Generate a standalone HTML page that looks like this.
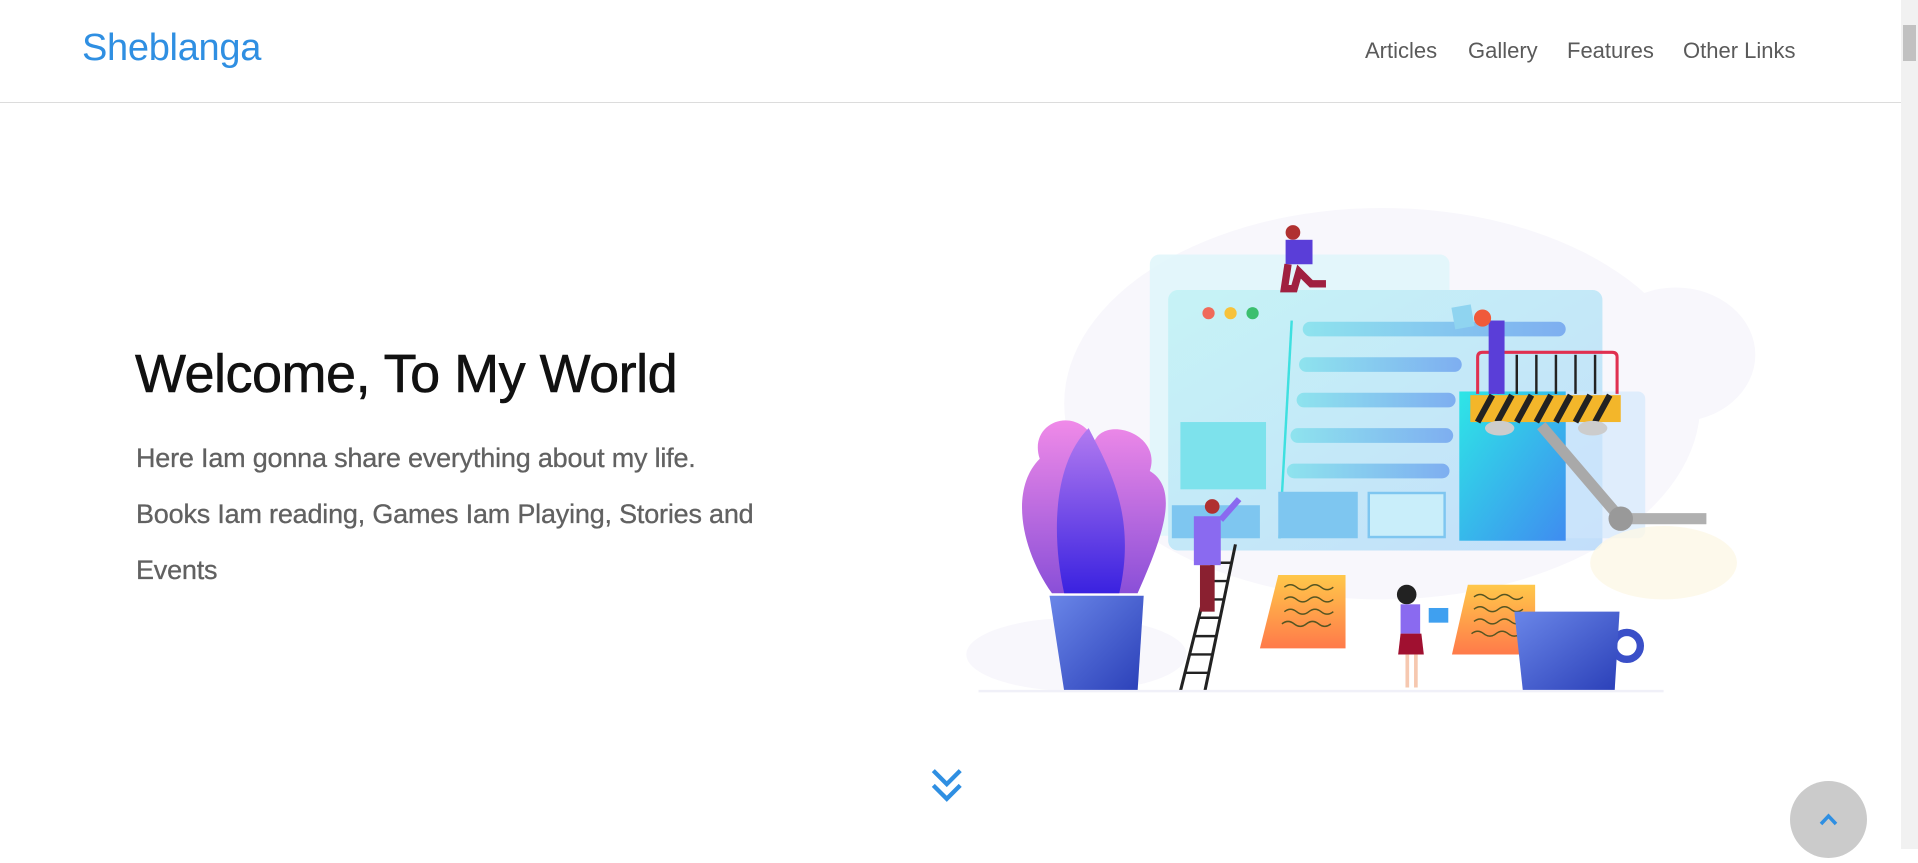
<!DOCTYPE html>
<html><head><meta charset="utf-8"><style>
html,body{margin:0;padding:0;}
body{width:1918px;height:849px;overflow:hidden;background:#fff;position:relative;font-family:"Liberation Sans",sans-serif;}
.hdr{position:absolute;left:0;top:0;width:1901px;height:102px;border-bottom:1px solid #dcdcdc;background:#fff;}
.logo{position:absolute;left:82px;top:27px;font-size:38px;color:#2f8fe2;letter-spacing:-0.3px;}
.nav{position:absolute;top:38px;font-size:22px;color:#5a5a5a;}
h1{position:absolute;left:135px;top:343px;margin:0;font-size:54px;font-weight:normal;color:#111;letter-spacing:-0.5px;white-space:nowrap;-webkit-text-stroke:0.6px #111;}
.p{position:absolute;left:136px;top:430px;font-size:27px;line-height:56px;color:#616161;letter-spacing:-0.2px;white-space:nowrap;-webkit-text-stroke:0.3px #616161;}
.sb{position:absolute;right:0;top:0;width:17px;height:849px;background:#f1f1f1;}
.thumb{position:absolute;right:2px;top:25px;width:13px;height:36px;background:#c1c1c1;}
.top{position:absolute;left:1790px;top:781px;width:77px;height:77px;border-radius:50%;background:#cbcbcb;}
</style></head><body>
<div class="hdr">
<div class="logo">Sheblanga</div>
<div class="nav" style="left:1365px">Articles</div>
<div class="nav" style="left:1468px">Gallery</div>
<div class="nav" style="left:1567px">Features</div>
<div class="nav" style="left:1683px">Other Links</div>
</div>
<h1>Welcome, To My World</h1>
<div class="p">Here Iam gonna share everything about my life.<br>Books Iam reading, Games Iam Playing, Stories and<br>Events</div>

<svg style="position:absolute;left:0;top:0" width="1918" height="849" viewBox="0 0 1568 694">
<defs>
<linearGradient id="pn" x1="0" y1="0" x2="1" y2="1"><stop offset="0" stop-color="#c6f3f6"/><stop offset="1" stop-color="#c2defa"/></linearGradient>
<linearGradient id="bar" x1="0" y1="0" x2="1" y2="0"><stop offset="0" stop-color="#8ee3ee"/><stop offset="1" stop-color="#7eaef0"/></linearGradient>
<linearGradient id="tb" x1="0" y1="0" x2="1" y2="1"><stop offset="0" stop-color="#2ee6e6"/><stop offset="1" stop-color="#3f8cf0"/></linearGradient>
<linearGradient id="lf" x1="0" y1="0" x2="0" y2="1"><stop offset="0" stop-color="#f08ae8"/><stop offset="1" stop-color="#8a4fd8"/></linearGradient>
<linearGradient id="lf2" x1="0" y1="0" x2="0" y2="1"><stop offset="0" stop-color="#b27af0"/><stop offset="1" stop-color="#3a22e0"/></linearGradient>
<linearGradient id="nt" x1="0" y1="0" x2="0" y2="1"><stop offset="0" stop-color="#ffc84a"/><stop offset="1" stop-color="#ff7a4a"/></linearGradient>
<linearGradient id="pot" x1="0" y1="0" x2="1" y2="1"><stop offset="0" stop-color="#6a86e8"/><stop offset="1" stop-color="#2a3fb8"/></linearGradient>
</defs>
<ellipse cx="1130" cy="330" rx="260" ry="160" fill="#f8f7fc"/>
<ellipse cx="1370" cy="290" rx="65" ry="55" fill="#f8f7fc"/>
<ellipse cx="880" cy="535" rx="90" ry="30" fill="#f8f7fc"/>
<rect x="940" y="208" width="245" height="230" rx="8" fill="#ddf5fa" opacity=".8"/>
<rect x="955" y="237" width="355" height="213" rx="8" fill="url(#pn)"/>
<rect x="1200" y="320" width="145" height="120" rx="6" fill="#cfe6fb" opacity=".6"/>
<circle cx="988" cy="256" r="5" fill="#f06a5a"/><circle cx="1006" cy="256" r="5" fill="#f7c23a"/><circle cx="1024" cy="256" r="5" fill="#3bbf6e"/>
<line x1="1056" y1="262" x2="1046" y2="440" stroke="#3ee0e0" stroke-width="2"/>
<rect x="1065" y="263" width="215" height="12" rx="6" fill="url(#bar)"/>
<rect x="1062" y="292" width="133" height="12" rx="6" fill="url(#bar)"/>
<rect x="1060" y="321" width="130" height="12" rx="6" fill="url(#bar)"/>
<rect x="1055" y="350" width="133" height="12" rx="6" fill="url(#bar)"/>
<rect x="1052" y="379" width="133" height="12" rx="6" fill="url(#bar)"/>
<rect x="965" y="345" width="70" height="55" fill="#7de2ec"/>
<rect x="958" y="413" width="72" height="27" fill="#7ec6f0"/>
<rect x="1045" y="402" width="65" height="38" fill="#7ec6f0"/>
<rect x="1119" y="403" width="62" height="36" fill="#c9eefa" stroke="#7ec6f0" stroke-width="2"/>
<rect x="1193" y="320" width="87" height="122" fill="url(#tb)"/>
<path d="M1208 322V292Q1208 288 1212 288H1318Q1322 288 1322 292V322" fill="none" stroke="#e03050" stroke-width="2.5"/>
<g stroke="#222" stroke-width="2"><line x1="1225" y1="290" x2="1225" y2="322"/><line x1="1240" y1="290" x2="1240" y2="322"/><line x1="1256" y1="290" x2="1256" y2="322"/><line x1="1272" y1="290" x2="1272" y2="322"/><line x1="1288" y1="290" x2="1288" y2="322"/><line x1="1304" y1="290" x2="1304" y2="322"/></g>
<rect x="1202" y="323" width="123" height="22" fill="#f3b62a"/>
<g stroke="#222" stroke-width="5"><line x1="1208" y1="345" x2="1220" y2="323"/><line x1="1224" y1="345" x2="1236" y2="323"/><line x1="1240" y1="345" x2="1252" y2="323"/><line x1="1256" y1="345" x2="1268" y2="323"/><line x1="1272" y1="345" x2="1284" y2="323"/><line x1="1288" y1="345" x2="1300" y2="323"/><line x1="1304" y1="345" x2="1316" y2="323"/></g>
<ellipse cx="1226" cy="350" rx="12" ry="6" fill="#ccc"/><ellipse cx="1302" cy="350" rx="12" ry="6" fill="#ccc"/>
<path d="M1260 348L1325 424" stroke="#a9a9a9" stroke-width="9"/>
<path d="M1325 424H1395" stroke="#b0b0b0" stroke-width="9"/>
<circle cx="1325" cy="424" r="10" fill="#999"/>
<ellipse cx="1360" cy="460" rx="60" ry="30" fill="#fcf8e6" opacity=".8"/>
<rect x="1217" y="262" width="13" height="60" fill="#5a3ed8"/><circle cx="1212" cy="260" r="7" fill="#f05a3a"/><rect x="1188" y="250" width="16" height="18" fill="#8fd4f0" transform="rotate(-10 1196 259)"/>
<circle cx="1057" cy="190" r="6" fill="#b03030"/><rect x="1051" y="196" width="22" height="20" fill="#5a3ed8"/><path d="M1053 216L1050 236H1058L1062 222L1072 232H1084" stroke="#a02040" stroke-width="6" fill="none"/>
<path d="M965 565L995 445M985 565L1010 445" stroke="#222" stroke-width="2.5"/>
<g stroke="#222" stroke-width="2"><line x1="969" y1="550" x2="988" y2="550"/><line x1="973" y1="535" x2="992" y2="535"/><line x1="977" y1="520" x2="995" y2="520"/><line x1="980" y1="505" x2="998" y2="505"/><line x1="984" y1="490" x2="1001" y2="490"/><line x1="987" y1="475" x2="1004" y2="475"/><line x1="990" y1="460" x2="1007" y2="460"/></g>
<circle cx="991" cy="414" r="6" fill="#b03030"/><rect x="976" y="422" width="22" height="40" fill="#8a6af0"/><rect x="981" y="462" width="12" height="38" fill="#8a2030"/><line x1="998" y1="425" x2="1013" y2="408" stroke="#8a6af0" stroke-width="5"/>
<circle cx="1150" cy="486" r="8" fill="#222"/><rect x="1145" y="494" width="16" height="24" fill="#8a6af0"/><path d="M1145 518H1162L1164 535H1143Z" fill="#a01030"/><rect x="1149" y="535" width="3" height="27" fill="#f6c8b0"/><rect x="1156" y="535" width="3" height="27" fill="#f6c8b0"/><rect x="1168" y="497" width="16" height="12" fill="#3fa0f0"/>
<path d="M1045 470H1100V530H1030Z" fill="url(#nt)"/>
<path d="M1200 478H1255V535H1187Z" fill="url(#nt)"/>
<g stroke="#552" stroke-width="1.2" fill="none"><path d="M1050 480q5-4 10 0t10 0 10 0 10 0"/><path d="M1050 490q5-4 10 0t10 0 10 0 10 0"/><path d="M1050 500q5-4 10 0t10 0 10 0 10 0"/><path d="M1048 510q5-4 10 0t10 0 10 0 10 0"/><path d="M1205 488q5-4 10 0t10 0 10 0 10 0"/><path d="M1205 498q5-4 10 0t10 0 10 0 10 0"/><path d="M1205 508q5-4 10 0t10 0 10 0 10 0"/><path d="M1203 518q5-4 10 0t10 0 10 0 10 0"/></g>
<path d="M860 485C835 450 825 400 850 375C840 345 880 330 895 360C905 340 950 355 940 385C965 400 950 440 930 485Z" fill="url(#lf)"/>
<path d="M870 485C860 440 860 380 890 350C905 380 930 420 915 485Z" fill="url(#lf2)"/>
<path d="M858 487H935L930 565H870Z" fill="url(#pot)"/>
<circle cx="1330" cy="528" r="11" fill="none" stroke="#3a4fc8" stroke-width="6"/>
<path d="M1238 500H1324L1320 565H1245Z" fill="url(#pot)"/>
<line x1="800" y1="565" x2="1360" y2="565" stroke="#f0f0f8" stroke-width="2"/>
<path d="M763 630L774 641L785 630M763 642L774 653L785 642" fill="none" stroke="#2f8fe2" stroke-width="3.5"/>
</svg>
<div class="top"><svg width="77" height="77"><path d="M31 43L38.5 35L46 43" fill="none" stroke="#2f8fe2" stroke-width="3.5"/></svg></div>
<div class="sb"><div class="thumb"></div></div>
</body></html>
